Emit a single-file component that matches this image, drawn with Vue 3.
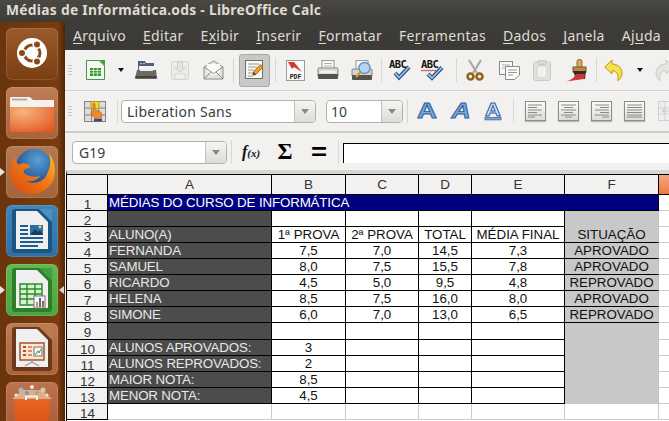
<script setup>
const menus = [
  ['', 'A', 'rquivo'], ['', 'E', 'ditar'], ['E', 'x', 'ibir'], ['', 'I', 'nserir'], ['', 'F', 'ormatar'],
  ['Fe', 'r', 'ramentas'], ['', 'D', 'ados'], ['', 'J', 'anela'], ['Aj', 'u', 'da']
]
const columns = ['A', 'B', 'C', 'D', 'E', 'F']
const table = {
  2: ['', '', '', '', '', ''],
  3: ['ALUNO(A)', '1ª PROVA', '2ª PROVA', 'TOTAL', 'MÉDIA FINAL', 'SITUAÇÃO'],
  4: ['FERNANDA', '7,5', '7,0', '14,5', '7,3', 'APROVADO'],
  5: ['SAMUEL', '8,0', '7,5', '15,5', '7,8', 'APROVADO'],
  6: ['RICARDO', '4,5', '5,0', '9,5', '4,8', 'REPROVADO'],
  7: ['HELENA', '8,5', '7,5', '16,0', '8,0', 'APROVADO'],
  8: ['SIMONE', '6,0', '7,0', '13,0', '6,5', 'REPROVADO'],
  9: ['', '', '', '', '', ''],
  10: ['ALUNOS APROVADOS:', '3', '', '', '', ''],
  11: ['ALUNOS REPROVADOS:', '2', '', '', '', ''],
  12: ['MAIOR NOTA:', '8,5', '', '', '', ''],
  13: ['MENOR NOTA:', '4,5', '', '', '', ''],
  14: ['', '', '', '', '', '']
}
const rows = Object.keys(table).map(Number).sort((a, b) => a - b).map((n) => ({ n, cells: table[n] }))
function cellClass(n, i) {
  return {
    dark: i === 0 && n < 14,
    center: i > 0,
    grayfill: i === 5 && n < 14,
    seamless: i === 5 && (n === 2 || (n >= 9 && n < 14)),
    last: n === 14
  }
}
</script>

<template>
  <div class="app">
    <header class="title">Médias de Informática.ods - LibreOffice Calc</header>
    <div class="body">
      <nav class="launcher">
        <div class="tile ubuntu">
          <svg width="52" height="52" viewBox="0 0 52 52">
            <circle cx="26" cy="25" r="15" fill="#fff" />
            <circle cx="26" cy="25" r="8" fill="none" stroke="#8a4a1c" stroke-width="3" />
            <circle cx="16" cy="25" r="4.6" fill="#fff" /><circle cx="16" cy="25" r="3" fill="#8a4a1c" />
            <circle cx="31" cy="16.4" r="4.6" fill="#fff" /><circle cx="31" cy="16.4" r="3" fill="#8a4a1c" />
            <circle cx="31" cy="33.6" r="4.6" fill="#fff" /><circle cx="31" cy="33.6" r="3" fill="#8a4a1c" />
          </svg>
        </div>
        <div class="tile folder">
          <svg width="52" height="52" viewBox="0 0 52 52">
            <defs>
              <radialGradient id="fold" cx="0.3" cy="0.2" r="1">
                <stop offset="0" stop-color="#f5b57c" /><stop offset="1" stop-color="#e2531f" />
              </radialGradient>
            </defs>
            <path d="M4 11 a1 1 0 0 1 1-1 H24 L27 13 H48 V21 H4Z" fill="#f4f1ee" />
            <rect x="6" y="11.5" width="15" height="2" fill="#b9a99b" />
            <path d="M4 20 H48 V44 a1 1 0 0 1 -1 1 H5 a1 1 0 0 1 -1-1Z" fill="url(#fold)" />
          </svg>
        </div>
        <div class="tile firefox active-left">
          <svg width="52" height="52" viewBox="0 0 52 52">
            <defs>
              <linearGradient id="fox" x1="0" y1="1" x2="1" y2="0">
                <stop offset="0" stop-color="#d9470f" /><stop offset="0.55" stop-color="#ee7a1a" /><stop offset="1" stop-color="#f6c22a" />
              </linearGradient>
              <radialGradient id="globe" cx="0.6" cy="0.3" r="0.8">
                <stop offset="0" stop-color="#5aa0d8" /><stop offset="1" stop-color="#153f80" />
              </radialGradient>
            </defs>
            <circle cx="28" cy="21" r="18" fill="url(#globe)" />
            <path d="M9 11 C1 22 3 37 13 44 C25 52 41 47 47 35 C51 26 49 15 43 7 C46 17 43 24 41 28 C38 36 28 39 20 35 C26 36 32 34 34 30 C28 32 22 30 18 27 C16 24 21 22 25 21 C21 17 16 16 13 19 C11 17 9 14 9 11Z" fill="url(#fox)" />
          </svg>
        </div>
        <div class="tile writer">
          <svg width="52" height="52" viewBox="0 0 52 52">
            <rect x="6" y="4" width="40" height="44" rx="3" fill="#195684" />
            <path d="M10 6 H31 L42 17 V44 H10Z" fill="#efefef" />
            <path d="M33 4 H46 V17Z" fill="#4f90c0" />
            <path d="M14 21 h8 M14 25 h8 M14 29 h8 M14 33 h23 M14 37 h23 M14 41 h18" stroke="#1e5f91" stroke-width="2" />
            <rect x="24" y="20" width="13" height="10" fill="#2f6f9f" />
            <path d="M24 30 L29 24 L32 27 L34 25 L37 30Z" fill="#12405f" /><circle cx="34" cy="22" r="1.4" fill="#f5d76e" />
          </svg>
        </div>
        <div class="tile calc active-both">
          <svg width="52" height="52" viewBox="0 0 52 52">
            <rect x="6" y="4" width="40" height="44" rx="3" fill="#2c7d2c" />
            <path d="M10 6 H31 L42 17 V44 H10Z" fill="#efefef" />
            <path d="M33 4 H46 V17Z" fill="#3f9f3c" />
            <path d="M14 20 h22 v21 h-22Z M14 25 h22 M14 30 h22 M14 35 h22 M21 20 v21 M29 20 v21" fill="#d9efd2" stroke="#2a8a2a" stroke-width="1.4" />
            <rect x="28" y="32" width="11" height="12" fill="#f6f6f6" stroke="#777" />
            <rect x="30" y="38" width="2" height="5" fill="#e08a2a" /><rect x="33" y="34" width="2" height="9" fill="#3573b8" /><rect x="36" y="37" width="2" height="6" fill="#d84a2a" />
          </svg>
        </div>
        <div class="tile impress">
          <svg width="52" height="52" viewBox="0 0 52 52">
            <rect x="6" y="4" width="40" height="44" rx="3" fill="#6b3a1d" />
            <path d="M10 6 H31 L42 17 V44 H10Z" fill="#efefef" />
            <path d="M33 4 H46 V17Z" fill="#bd7a50" />
            <rect x="14" y="20" width="24" height="17" fill="#fbe6d6" stroke="#a9532a" stroke-width="1.5" />
            <path d="M17 24 h3 M17 28 h3 M17 32 h3" stroke="#a9532a" stroke-width="2" /><path d="M22 24 h4 M22 28 h4 M22 32 h4" stroke="#d9926a" stroke-width="2" />
            <rect x="28" y="24" width="8" height="9" fill="#f5f5f5" stroke="#777" /><path d="M29 32 L32 28 L33 30 L35 26" stroke="#3a9a3a" fill="none" />
            <path d="M26 37 V40 M26 39 L19 43 M26 39 L33 43" stroke="#999" stroke-width="1.2" />
          </svg>
        </div>
        <div class="tile shop">
          <svg width="52" height="52" viewBox="0 0 52 52">
            <defs>
              <linearGradient id="bag" x1="0" y1="0" x2="0" y2="1"><stop offset="0" stop-color="#e8651f" /><stop offset="1" stop-color="#d64a16" /></linearGradient>
            </defs>
            <path d="M8 17 H44 L42 52 H10Z" fill="url(#bag)" />
            <path d="M6 17 H46 L36 8 H16Z" fill="#fbe4c8" opacity="0.55" />
            <g>
              <circle cx="15" cy="8" r="2.5" fill="#9fb8cf" /><circle cx="26" cy="5" r="2" fill="#f1e6d8" /><circle cx="37" cy="8" r="2.5" fill="#d8c9b6" />
              <circle cx="21" cy="11" r="2" fill="#7f93a8" /><circle cx="31" cy="11" r="2" fill="#b0a08a" /><circle cx="41" cy="13" r="1.6" fill="#f1e6d8" />
              <circle cx="10" cy="13" r="1.6" fill="#f1e6d8" />
            </g>
            <path d="M20 18 V14.5 H31 V18" fill="none" stroke="#f4efe9" stroke-width="2" />
          </svg>
        </div>
      </nav>
      <main class="main">
        <div class="menu">
          <span v-for="m in menus" :key="m[1] + m[2]">{{ m[0] }}<u>{{ m[1] }}</u>{{ m[2] }}</span>
        </div>
        <div class="bar tb1">
          <i class="handle"></i>
          <div class="t">
            <svg width="22" height="22" viewBox="0 0 22 22">
              <path d="M2.5 1.5 H15 L20.5 7 V20.5 H2.5Z" fill="#f7f7f4" stroke="#3d9a3d" />
              <path d="M15 1 H21 V7Z" fill="#3fa03f" />
              <rect x="6" y="9" width="11" height="8" fill="#2f9a2f" />
              <path d="M6 11.5 H17 M6 14 H17 M9.5 9 V17 M13.3 9 V17" stroke="#e8f5e0" stroke-width="0.8" />
            </svg>
          </div>
          <div class="t"><i class="caret"></i></div>
          <div class="t">
            <svg width="22" height="20" viewBox="0 0 22 20">
              <path d="M3 1 H10 L11 3 H19 V11 H3Z" fill="#4d5f7e" />
              <path d="M5 3.5 h2 M8 3.5 h2" stroke="#b5c2d6" />
              <rect x="4" y="6" width="16" height="6" fill="#f2f2f0" />
              <path d="M2 10 H21 L22 18 a1 1 0 0 1 -1 1 H1 a1 1 0 0 1 -1-1Z" fill="#6a6a66" />
              <rect x="0.5" y="16" width="21" height="2" fill="#44443f" />
              <rect x="5" y="9" width="13" height="2" fill="#e9e9e6" />
            </svg>
          </div>
          <div class="t">
            <svg width="20" height="21" viewBox="0 0 20 21" opacity="0.45">
              <rect x="1.5" y="1.5" width="17" height="18" rx="2" fill="#e6e6e3" stroke="#b5b5b0" />
              <path d="M7.5 2 V8 H5 L10 12.5 L15 8 H12.5 V2Z" fill="#d3d3cf" stroke="#a9a9a3" />
              <rect x="5" y="14" width="10" height="5" fill="#f5f5f2" stroke="#b5b5b0" />
            </svg>
          </div>
          <div class="t">
            <svg width="21" height="20" viewBox="0 0 21 20">
              <path d="M1 7 L10.5 0.8 L20 7 V19 H1Z" fill="#e4e4e1" stroke="#8c8c88" />
              <path d="M4 4 H17 V12 L10.5 15 L4 12Z" fill="#fbfbfa" />
              <path d="M1 7 L10.5 13.5 L20 7 M1 19 L8 12 M20 19 L13 12" fill="none" stroke="#8c8c88" />
            </svg>
          </div>
          <i class="sep"></i>
          <div class="t">
            <div class="pressed">
              <svg width="19" height="20" viewBox="0 0 19 20">
                <rect x="0.5" y="0.5" width="17" height="18" fill="#f7f7f3" stroke="#6f6f6a" />
                <path d="M3 4 h11 M3 7 h9 M3 10 h6 M3 13 h5 M3 16 h5" stroke="#9a9a94" />
                <path d="M8 15 L8.5 12 L15.5 4.5 L18 7 L11 14.5Z" fill="#f0a020" stroke="#8a5510" stroke-width="0.8" />
                <path d="M8 15 L8.5 12 L11 14.5Z" fill="#333" />
              </svg>
            </div>
          </div>
          <i class="sep"></i>
          <div class="t">
            <svg width="19" height="21" viewBox="0 0 19 21">
              <rect x="0.5" y="0.5" width="18" height="20" fill="#fafafa" stroke="#9a9a96" />
              <path d="M2 2 H8 L16 12 L8 7 L6 9Z" fill="#d9363a" />
              <text x="9.5" y="18.5" text-anchor="middle" class="pdf">PDF</text>
            </svg>
          </div>
          <div class="t">
            <svg width="22" height="20" viewBox="0 0 22 20">
              <rect x="5" y="0.5" width="12" height="9" fill="#f8f8f6" stroke="#999" />
              <path d="M7 3.5 h8 M7 6 h8" stroke="#b5b5b0" />
              <path d="M1 9 a1 1 0 0 1 1-1 H20 a1 1 0 0 1 1 1 V16 H1Z" fill="#dcdcd8" stroke="#85857f" />
              <rect x="1" y="14" width="20" height="5" rx="1" fill="#54544f" />
              <rect x="4" y="11" width="14" height="2" fill="#f5f5f3" />
            </svg>
          </div>
          <div class="t">
            <svg width="22" height="21" viewBox="0 0 22 21">
              <rect x="5" y="0.5" width="12" height="9" fill="#f8f8f6" stroke="#999" />
              <path d="M1 10 a1 1 0 0 1 1-1 H20 a1 1 0 0 1 1 1 V16 H1Z" fill="#d4d4d0" stroke="#85857f" />
              <rect x="1" y="15" width="20" height="5" rx="1" fill="#54544f" />
              <circle cx="13.5" cy="8" r="5.5" fill="#b8d4ee" stroke="#6b8fb5" stroke-width="1.4" />
              <path d="M9.5 12 L5 17" stroke="#d99a30" stroke-width="2.4" />
            </svg>
          </div>
          <i class="sep"></i>
          <div class="t">
            <svg width="24" height="22" viewBox="0 0 24 22">
              <text x="1" y="9" class="abc">ABC</text>
              <path d="M7 14 L11 18.5 L21 8" fill="none" stroke="#27548f" stroke-width="4" />
              <path d="M7 14 L11 18.5 L21 8" fill="none" stroke="#9cc0e6" stroke-width="1.8" />
            </svg>
          </div>
          <div class="t">
            <svg width="24" height="22" viewBox="0 0 24 22">
              <text x="1" y="9" class="abc">ABC</text>
              <path d="M1 11 l1.5 1 1.5-1 1.5 1 1.5-1 1.5 1 1.5-1 1.5 1 1.5-1 1.5 1 1.5-1" fill="none" stroke="#d02828" />
              <path d="M8 15 L12 19 L22 8.5" fill="none" stroke="#27548f" stroke-width="4" />
              <path d="M8 15 L12 19 L22 8.5" fill="none" stroke="#9cc0e6" stroke-width="1.8" />
            </svg>
          </div>
          <i class="sep"></i>
          <div class="t">
            <svg width="18" height="22" viewBox="0 0 18 22">
              <path d="M3 1 L11 14 M15 1 L7 14" stroke="#a8a8a4" stroke-width="2.2" />
              <circle cx="4.5" cy="17.5" r="3" fill="none" stroke="#93631a" stroke-width="2.6" />
              <circle cx="13.5" cy="17.5" r="3" fill="none" stroke="#93631a" stroke-width="2.6" />
            </svg>
          </div>
          <div class="t">
            <svg width="21" height="19" viewBox="0 0 21 19">
              <rect x="0.5" y="0.5" width="13" height="13" fill="#f7f7f5" stroke="#8a8a86" />
              <path d="M3 4 h8 M3 7 h5" stroke="#aaa" />
              <path d="M6.5 5.5 H20.5 V14 L15.5 18.5 H6.5Z" fill="#fbfbf9" stroke="#8a8a86" />
              <path d="M9 9 h9 M9 11.5 h9 M9 14 h5" stroke="#999" />
            </svg>
          </div>
          <div class="t">
            <svg width="18" height="21" viewBox="0 0 18 21" opacity="0.5">
              <rect x="0.5" y="2" width="17" height="18.5" rx="2" fill="#d2d2ce" stroke="#a5a5a0" />
              <rect x="5" y="0.5" width="8" height="4" rx="1" fill="#c2c2be" stroke="#a5a5a0" />
              <path d="M4 6 H14 V15 L11 18 H4Z" fill="#f0f0ee" stroke="#b5b5b0" />
            </svg>
          </div>
          <div class="t">
            <svg width="21" height="23" viewBox="0 0 21 23">
              <rect x="11" y="0.5" width="5" height="9" rx="2" fill="#d8a860" stroke="#9b6c2c" />
              <rect x="7" y="8" width="13" height="5" fill="#b98a45" stroke="#7a5420" />
              <path d="M7 12 H20 L19 20 H10Z" fill="#3a2a22" />
              <path d="M10 15 L19 15 L18 20 L0 22.5 C5 21 8 19 10 15Z" fill="#c73a3e" />
            </svg>
          </div>
          <i class="sep"></i>
          <div class="t">
            <svg width="19" height="23" viewBox="0 0 19 23">
              <path d="M0.8 8 L8 1 V5 C14 5 18 9 18 14 C18 18 16 20.5 13.5 21.5 C15 18 14.5 12.5 8 11.5 V15Z" fill="#f5e24e" stroke="#b79a18" />
            </svg>
          </div>
          <div class="t"><i class="caret"></i></div>
          <div class="t">
            <svg width="19" height="23" viewBox="0 0 19 23" opacity="0.45">
              <path d="M18.2 8 L11 1 V5 C5 5 1 9 1 14 C1 18 3 20.5 5.5 21.5 C4 18 4.5 12.5 11 11.5 V15Z" fill="#d5d5d1" stroke="#a0a09b" />
            </svg>
          </div>
        </div>
        <div class="bar tb2">
          <i class="handle"></i>
          <div class="t">
            <svg width="22" height="21" viewBox="0 0 22 21">
              <rect x="0.5" y="0.5" width="21" height="20" fill="#dedcd8" stroke="#85837e" />
              <path d="M7.5 0 V21 M14.5 0 V21 M0 7 H22 M0 14 H22" stroke="#85837e" />
              <rect x="7" y="0.5" width="8" height="7" fill="#f6d83a" stroke="#b49a10" />
              <path d="M9 3 C9 1.8 11 1.8 11 3 V9 L15 10 C18 11 18 13 17 18 H11 L7 12 C7 10.5 8 10.5 9 11Z" fill="#f08a2c" stroke="#b05c10" stroke-width="0.6" />
              <rect x="10" y="18" width="8" height="2.5" fill="#2a4f8f" />
            </svg>
          </div>
          <i class="sep"></i>
          <div class="combo font">
            <span class="combo-text">Liberation Sans</span>
            <span class="drop"><i></i></span>
          </div>
          <div class="combo size">
            <span class="combo-text">10</span>
            <span class="drop"><i></i></span>
          </div>
          <i class="sep"></i>
          <div class="t"><svg width="30" height="36" viewBox="0 0 30 36"><text transform="translate(15 25) scale(1.25 1)" text-anchor="middle" class="fa bold">A</text></svg></div>
          <div class="t"><svg width="30" height="36" viewBox="0 0 30 36"><text transform="translate(15 25) scale(1.2 1)" text-anchor="middle" class="fa ital">A</text></svg></div>
          <div class="t"><svg width="30" height="36" viewBox="0 0 30 36"><text transform="translate(15 22.5) scale(1.15 1)" text-anchor="middle" class="fa thin">A</text><rect x="7" y="24.5" width="16" height="2.4" fill="#7ba6d9" stroke="#2d5f9e" stroke-width="0.7" /></svg></div>
          <i class="sep"></i>
          <div class="t"><div class="al"><svg width="21" height="20" viewBox="0 0 21 20"><path d="M3 4 H17 M3 6.5 H12 M3 9 H17 M3 11.5 H12 M3 14 H17 M3 16 H10" stroke="#8a8a85" /></svg></div></div>
          <div class="t"><div class="al"><svg width="21" height="20" viewBox="0 0 21 20"><path d="M3 4 H18 M6 6.5 H15 M3 9 H18 M6 11.5 H15 M3 14 H18 M7 16 H14" stroke="#8a8a85" /></svg></div></div>
          <div class="t"><div class="al"><svg width="21" height="20" viewBox="0 0 21 20"><path d="M4 4 H18 M9 6.5 H18 M4 9 H18 M9 11.5 H18 M4 14 H18 M11 16 H18" stroke="#8a8a85" /></svg></div></div>
          <div class="t"><div class="al"><svg width="21" height="20" viewBox="0 0 21 20"><path d="M3 4 H18 M3 6.5 H18 M3 9 H18 M3 11.5 H18 M3 14 H18 M3 16 H18" stroke="#8a8a85" /></svg></div></div>
          <div class="t">
            <svg width="21" height="20" viewBox="0 0 21 20" opacity="0.45">
              <rect x="0.5" y="0.5" width="20" height="19" fill="#eeeeec" stroke="#aaa" />
              <path d="M7 0 V20 M14 0 V20 M0 7 H21 M0 13 H21" stroke="#aaa" /><path d="M4 10 H11 M4 10 L7 8 M4 10 L7 12" stroke="#999" />
            </svg>
          </div>
        </div>
        <div class="fbar">
          <div class="combo name">
            <span class="combo-text">G19</span>
            <span class="drop"><i></i></span>
          </div>
          <i class="sep"></i>
          <span class="fx"><b>f</b><small>(x)</small></span>
          <span class="sigma">Σ</span>
          <span class="equals">=</span>
          <i class="sep tall"></i>
          <div class="input"></div>
        </div>
        <section class="sheet">
          <div class="h corner"></div>
          <div v-for="c in columns" :key="c" class="h">{{ c }}</div>
          <div class="h gsel"></div>

          <div class="rh">1</div>
          <div class="banner">MÉDIAS DO CURSO DE INFORMÁTICA</div>
          <div class="g"></div>

          <template v-for="r in rows" :key="r.n">
            <div class="rh">{{ r.n }}</div>
            <div v-for="(v, i) in r.cells" :key="i" class="c" :class="cellClass(r.n, i)">{{ v }}</div>
            <div class="g"></div>
          </template>
        </section>
      </main>
    </div>
  </div>
</template>

<style>
html, body { margin: 0; padding: 0; background: #f2f1f0; overflow: hidden; }
</style>

<style scoped>
* { box-sizing: border-box; }
.app { width: 669px; height: 421px; overflow: hidden; display: flex; flex-direction: column; font-family: "Noto Sans", sans-serif; }
.title { height: 22px; flex: none; background: linear-gradient(#4a4843, #3d3b37); color: #dfdbd2; font-weight: 700; font-size: 13.8px; line-height: 20px; padding-left: 6px; white-space: nowrap; letter-spacing: 0.29px; }
.body { flex: 1; display: flex; min-height: 0; }
.launcher { width: 65px; flex: none; display: flex; flex-direction: column; gap: 7px; padding: 6px 0 0 6px; background: linear-gradient(90deg, #6a340d 0, #793c0d 90%, #4d2508 100%); }
.tile { width: 52px; height: 52px; flex: none; border-radius: 6px; position: relative; box-shadow: inset 0 0 0 1px rgba(255,255,255,0.12); }
.tile svg { display: block; }
.ubuntu { background: linear-gradient(#9a5a2d, #7b3e12); }
.folder { background: linear-gradient(#bd7d58, #a9623a); }
.firefox { background: linear-gradient(#b37a55, #a5643a); }
.writer { background: linear-gradient(#3f86bb, #2f6ea3); }
.calc { background: linear-gradient(#63b750, #4ea340); }
.impress { background: linear-gradient(#bd7b55, #ad6238); }
.shop { background: linear-gradient(#bb7450, #a9582f); overflow: hidden; }
.active-left::before, .active-both::before { content: ""; position: absolute; left: -6px; top: 22px; border: 4px solid transparent; border-left: 5px solid #e8e4e0; border-right: 0; }
.active-both::after { content: ""; position: absolute; right: -6px; top: 22px; border: 4px solid transparent; border-right: 5px solid #d8d6d2; border-left: 0; }
.main { flex: 1; min-width: 0; display: flex; flex-direction: column; background: #f2f1f0; }
.menu { height: 28px; flex: none; background: linear-gradient(#3f3d39, #3a3935); color: #dfdbd2; display: flex; gap: 17px; padding-left: 8px; font-size: 14px; line-height: 27px; white-space: nowrap; letter-spacing: 0.3px; }
.menu u { text-underline-offset: 2px; text-decoration-thickness: 1px; }
.bar { flex: none; display: grid; align-items: center; padding-left: 3px; }
.tb1 { height: 41px; border-bottom: 1px solid #d4d2ce; grid-template-columns: 5px 44px 8px 42px 26px 40px 1px 41px 1px 38px 28px 39px 1px 36px 28px 11px 36px 32px 34px 34px 4px 32px 22px 26px; }
.tb2 { height: 42px; border-bottom: 2px solid #cfcdc9; grid-template-columns: 5px 44px 1px 3px 195px 10px 77px 4px 1px 38px 30px 34px 4px 42px 24px 42px 24px 44px; }
.tb2 .font { grid-column: 5; }
.tb2 .size { grid-column: 7; }
.tb2 .size + .sep { grid-column: 9; }
.t { display: flex; align-items: center; justify-content: center; min-width: 0; height: 24px; }
.t svg { display: block; flex: none; }
.handle { width: 4px; height: 10px; justify-self: start; background: repeating-linear-gradient(#c9c7c3 0 1px, transparent 1px 3px); }
.sep { display: block; width: 1px; height: 24px; background: #d9d7d3; justify-self: end; }
.caret { display: block; width: 0; height: 0; border: 3.5px solid transparent; border-top: 4px solid #111; border-bottom: 0; }
.pressed { width: 31px; height: 33px; flex: none; border-radius: 3px; background: #c9c8c6; border: 1px solid #a9a8a5; display: flex; align-items: center; justify-content: center; }
.pdf { font: 700 6.5px "Liberation Mono", monospace; fill: #222; }
.abc { font: 700 10.5px "DejaVu Sans Mono", monospace; fill: #111; letter-spacing: -0.6px; }
.fa { font-family: "Liberation Sans", sans-serif; font-weight: 700; font-size: 22px; fill: #7ba6d9; stroke: #2d5f9e; stroke-width: 0.9px; }
.fa.ital { font-style: italic; }
.fa.thin { font-size: 19px; fill: #dbe7f5; }
.al { width: 21px; height: 20px; background: linear-gradient(#fbfbfa, #dcdcd8); border: 1px solid #8d8d88; box-shadow: 0 1px 1px #bbb; }
.al svg { margin: -1px; display: block; }
.combo { height: 23px; display: flex; background: #fff; border: 1px solid #b3b1ac; border-radius: 4px; overflow: hidden; font-size: 14px; color: #3c3c3c; }
.combo-text { flex: 1; padding-left: 6px; line-height: 21px; white-space: nowrap; }
.font .combo-text { letter-spacing: 0.25px; padding-left: 5px; }
.size .combo-text { padding-left: 4px; }
.drop { width: 21px; flex: none; border-left: 1px solid #c3c1bc; background: linear-gradient(#f6f5f4, #dedcd9); display: flex; align-items: center; justify-content: center; }
.drop i { display: block; border: 4px solid transparent; border-top: 5px solid #8a8884; border-bottom: 0; }
.fbar { height: 37px; flex: none; display: flex; align-items: center; padding: 0 0 0 7px; }
.name { width: 155px; margin-top: 1px; flex: none; }
.fbar > .sep { margin-left: 4px; height: 24px; }
.fx { margin-left: 10px; width: 24px; font: italic 700 16px "Liberation Serif", serif; color: #111; white-space: nowrap; }
.fx small { font-size: 11px; }
.sigma { margin-left: 7px; width: 24px; font: 700 23px "Liberation Serif", serif; color: #000; line-height: 1; text-align: center; }
.equals { margin-left: 10px; width: 24px; font: 700 24px "Liberation Sans", sans-serif; color: #000; line-height: 1; text-align: center; transform: scaleX(1.15); }
.sep.tall { margin-left: 7px; }
.fbar > .input { flex: 1; margin-left: 4px; height: 20px; margin-top: 2px; background: #fff; border-top: 1px solid #000; border-left: 1px solid #000; }
.sheet { flex: 1; min-height: 0; margin-left: 1px; display: grid; border-top: 4px solid #d9d7d3; background: #fff; grid-template-columns: 41px 164px 74px 73px 53px 93px 94px 1fr; grid-template-rows: 21px repeat(8, 16px) 17px 16px 16px 16px 16px 16px 17px; font: 13.33px/15px "Liberation Sans", sans-serif; color: #111; align-content: start; border-left: 1px solid #000; }
.h { background: #f2f1f0; border-top: 1px solid #000; border-right: 1px solid #000; border-bottom: 1px solid #000; text-align: center; line-height: 19px; color: #333; font-size: 13.5px; }
.gsel { background: linear-gradient(#f4a784, #ee7a3f); border-right: 0; }
.rh { background: #f2f1f0; border-right: 1px solid #000; border-bottom: 1px solid #000; text-align: center; color: #333; font-size: 13.5px; line-height: 16px; padding-top: 2px; padding-left: 1px; overflow: hidden; }
.banner { grid-column: 2 / span 6; background: #000080; color: #fff; border-bottom: 1px solid #000; border-right: 1px solid #000; padding-left: 1px; line-height: 15px; white-space: nowrap; letter-spacing: -0.14px; }
.c { border-right: 1px solid #000; border-bottom: 1px solid #000; white-space: nowrap; padding-left: 1px; overflow: visible; background: #fff; line-height: 15px; }
.center { text-align: center; padding-left: 0; }
.dark { background: #4c4c4c; color: #e8e8e8; letter-spacing: -0.16px; }
.grayfill { background: #c8c8c8; border-right-color: #c0c0c0; }
.seamless { border-bottom-color: #c8c8c8; }
.last { border-right-color: #ccc; border-bottom-color: #ccc; }
.g { border-bottom: 1px solid #ccc; background: #fff; }
</style>
